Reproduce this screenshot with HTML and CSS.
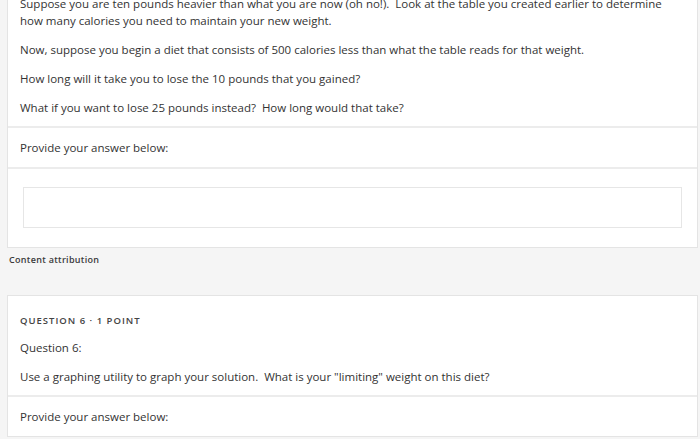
FILE: index.html
```html
<!DOCTYPE html>
<html>
<head>
<meta charset="utf-8">
<link rel="stylesheet" href="styles.css">
</head>
<body>
<div class="page">
  <div class="card card-first">
    <div class="section prompt">
      <p>Suppose you are ten pounds heavier than what you are now (oh no!).&nbsp; Look at the table you created earlier to determine how many calories you need to maintain your new weight.</p>
      <p>Now, suppose you begin a diet that consists of 500 calories less than what the table reads for that weight.</p>
      <p>How long will it take you to lose the 10 pounds that you gained?</p>
      <p>What if you want to lose 25 pounds instead?&nbsp; How long would that take?</p>
    </div>
    <div class="section answer-label">Provide your answer below:</div>
    <div class="section answer-box">
      <div class="input"></div>
    </div>
  </div>
  <div class="attribution">Content attribution</div>
  <div class="card card-second">
    <div class="section prompt">
      <div class="q-head">QUESTION 6 &middot; 1 POINT</div>
      <p>Question 6:</p>
      <p>Use a graphing utility to graph your solution.&nbsp; What is your "limiting" weight on this diet?</p>
    </div>
    <div class="section answer-label">Provide your answer below:</div>
  </div>
</div>
</body>
</html>
```

FILE: styles.css
```css
html, body {
  margin: 0;
  padding: 0;
  background: #f5f5f5;
  overflow: hidden;
  height: 439px;
}
.page {
  padding: 0 2px 0 7px;
  font-family: "Open Sans", "Liberation Sans", sans-serif;
  color: #333;
}
.card {
  background: #fff;
  border: 1px solid #e4e4e4;
}
.card-first {
  margin-top: -18px;
}
.section {
  padding: 0 12px;
  font-size: 11.5px;
  line-height: 17px;
}
.section + .section {
  border-top: 2px solid #ececec;
}
.prompt {
  padding-top: 12px;
  padding-bottom: 10px;
}
.prompt p {
  margin: 0;
}
.prompt p + p {
  margin-top: 12px;
}
.answer-label {
  padding-top: 11px;
  padding-bottom: 11px;
}
.answer-box {
  padding: 18px 15px 19px;
}
.input {
  height: 39px;
  border: 1px solid #e6e6e6;
}
.attribution {
  font-size: 9px;
  font-weight: 600;
  letter-spacing: 0.3px;
  color: #3a3a3a;
  padding: 5px 0 0 2px;
  height: 42px;
  line-height: 14px;
}
.q-head {
  font-size: 9.5px;
  font-weight: 600;
  letter-spacing: 1px;
  color: #444;
  line-height: 14px;
  margin-top: 6px;
  margin-bottom: 11px;
}
```
